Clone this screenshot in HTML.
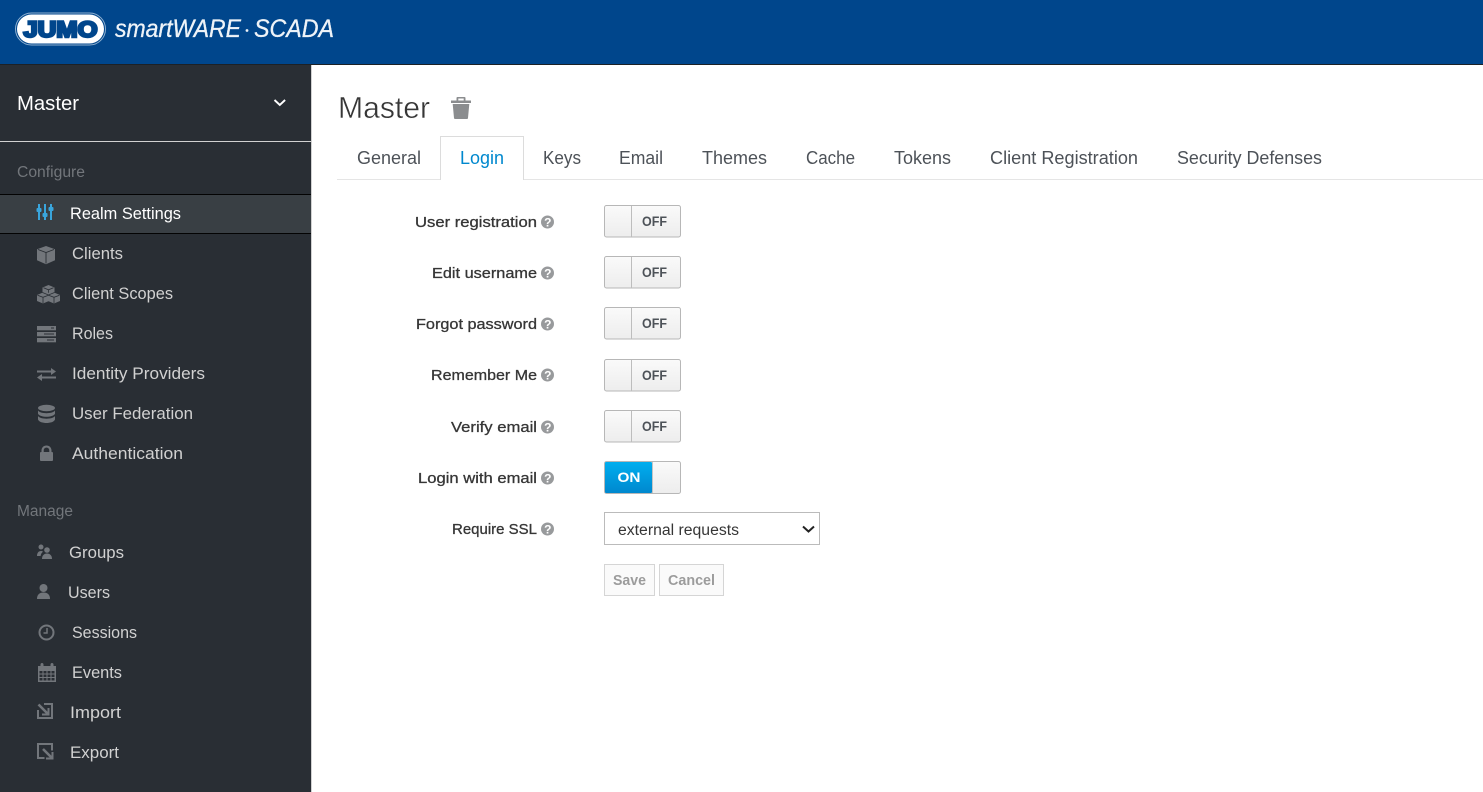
<!DOCTYPE html>
<html lang="en">
<head>
<meta charset="utf-8">
<title>Master - Login</title>
<style>
html,body{margin:0;padding:0;width:1483px;height:792px;overflow:hidden;background:#fff}
svg{display:block}
text{font-family:"Liberation Sans",sans-serif}
.nav{font-size:17px;fill:#d1d1d1}
.sec{font-size:15.5px;fill:#72767b}
.tab{font-size:18px;fill:#4d5258}
.lab{font-size:15px;fill:#363636;font-weight:400;stroke:#363636;stroke-width:.3px;text-anchor:start}
.tg{font-size:13.5px;font-weight:700;fill:#4d5258}
.ic{fill:#72767b}
</style>
</head>
<body>
<svg width="1483" height="792" viewBox="0 0 1483 792" xmlns="http://www.w3.org/2000/svg">
<defs>
<linearGradient id="g1" x1="0" y1="0" x2="0" y2="1"><stop offset="0" stop-color="#fafafa"/><stop offset="1" stop-color="#ededed"/></linearGradient>
<linearGradient id="g2" x1="0" y1="0" x2="0" y2="1"><stop offset="0" stop-color="#00aeef"/><stop offset="1" stop-color="#0088ce"/></linearGradient>
<g id="help"><circle r="6.5" fill="#989a9c"/><text x="-3.4" y="4.500" font-size="12" font-weight="700" fill="#fff">?</text></g>
<g id="off"><rect x="604.5" y=".5" width="76" height="31.5" rx="2" fill="url(#g1)" stroke="#b7b7b7"/><path d="M631.5 1v31" stroke="#bdbdbd"/><text class="tg" x="642" y="21" textLength="25" lengthAdjust="spacingAndGlyphs">OFF</text></g>
</defs>

<!-- header -->
<rect width="1483" height="64" fill="#00468c"/>
<rect y="64" width="1483" height="1" fill="#1c2126"/>
<rect x="15.500" y="13" width="90" height="32" rx="16" fill="#00468c" stroke="#8fb0d0" stroke-width="1"/>
<rect x="17" y="14.500" width="87" height="29" rx="14.500" fill="#fff"/>
<text x="23.500" y="37" font-size="22" font-weight="700" fill="#00468c" stroke="#00468c" stroke-width="2.400" textLength="74" lengthAdjust="spacingAndGlyphs">JUMO</text>
<text x="115" y="37" font-size="25" font-style="italic" fill="#eef3f8" stroke="#eef3f8" stroke-width=".3" textLength="126" lengthAdjust="spacingAndGlyphs">smartWARE</text>
<circle cx="247" cy="30.500" r="1.400" fill="#eef3f8"/>
<text x="254" y="37" font-size="25" font-style="italic" fill="#eef3f8" stroke="#eef3f8" stroke-width=".3" textLength="80" lengthAdjust="spacingAndGlyphs">SCADA</text>

<!-- sidebar -->
<rect y="65" width="311" height="727" fill="#292e34"/>
<rect x="311" y="65" width="1" height="727" fill="#d1d1d1"/>
<text x="17" y="110" font-size="20.5" fill="#fff" textLength="62" lengthAdjust="spacingAndGlyphs">Master</text>
<path d="M274.5 100l5.3 5 5.3-5" fill="none" stroke="#fff" stroke-width="1.9"/>
<rect y="141" width="311" height="1" fill="#d1d1d1"/>
<text class="sec" x="17" y="177" textLength="68" lengthAdjust="spacingAndGlyphs">Configure</text>

<rect y="194" width="311" height="40" fill="#393f44"/>
<rect y="194" width="311" height="1" fill="#030303"/>
<rect y="233" width="311" height="1" fill="#030303"/>
<g fill="#39a5dc">
<rect x="38" y="204" width="2" height="16"/><rect x="36.5" y="208" width="5" height="4" rx="1"/>
<rect x="44" y="204" width="2" height="16"/><rect x="42.5" y="213" width="5" height="4" rx="1"/>
<rect x="50" y="204" width="2" height="16"/><rect x="48.500" y="207" width="5" height="4" rx="1"/>
</g>
<text class="nav" x="70" y="219" style="fill:#fff" textLength="111" lengthAdjust="spacingAndGlyphs">Realm Settings</text>

<!-- clients -->
<path class="ic" d="M46 246l9 3.200v11l-9 4-9-4v-11z"/><path d="M38 249.500l8 3 8-3M46 252.500v11" fill="none" stroke="#292e34" stroke-width=".9"/>
<text class="nav" x="72" y="259" textLength="51" lengthAdjust="spacingAndGlyphs">Clients</text>
<!-- scopes -->
<g class="ic"><path d="M48.500 285l6 2.500v6.500l-6 2.500-6-2.500v-6.500z"/><path d="M43 292.500l6 2.500v6l-6 2.500-6-2.500v-6z"/><path d="M54 292.500l6 2.500v6l-6 2.500-6-2.500v-6z"/></g>
<path d="M43.500 287.800l5 2 5-2M48.500 289.800v3M37.500 295.300l5.500 2 5.500-2M43 297.300v6M48.500 295.300l5.500 2 5.500-2M54 297.300v6M42.500 292.500l6 2.500 6-2.500" fill="none" stroke="#292e34" stroke-width=".8"/>
<text class="nav" x="72" y="299" textLength="101" lengthAdjust="spacingAndGlyphs">Client Scopes</text>
<!-- roles -->
<g class="ic"><rect x="37" y="326" width="19" height="4.300"/><rect x="37" y="332" width="19" height="4.300"/><rect x="37" y="338" width="19" height="4.300"/></g>
<path d="M51 328h3M44 334h10M47 340h7" stroke="#292e34" stroke-width="1"/>
<text class="nav" x="72" y="339" textLength="41" lengthAdjust="spacingAndGlyphs">Roles</text>
<!-- identity -->
<path class="ic" d="M37 370.500h14v-2.500l5 3.500-5 3.500v-2.500H37zM56 376.500H42V374l-5 3.500 5 3.500v-2.500h14z"/>
<text class="nav" x="72" y="379" textLength="133" lengthAdjust="spacingAndGlyphs">Identity Providers</text>
<!-- federation -->
<g class="ic"><ellipse cx="46.500" cy="408" rx="8.500" ry="3.200"/><path d="M38 410.500c1.500 2 5 2.700 8.500 2.700s7-.7 8.500-2.700v3.200c-1 2-5 3-8.500 3s-7.500-1-8.500-3zM38 416c1.500 2 5 2.700 8.500 2.700s7-.7 8.500-2.700v3.500c-1 2.500-5 3.500-8.500 3.500s-7.500-1-8.500-3.500z"/></g>
<text class="nav" x="72" y="419" textLength="121" lengthAdjust="spacingAndGlyphs">User Federation</text>
<!-- auth -->
<path class="ic" fill-rule="evenodd" d="M40 453c0-.6.400-1 1-1h.5v-1.500c0-3 2.200-5 5-5s5 2 5 5V452h.5c.6 0 1 .4 1 1v7c0 .6-.4 1-1 1H41c-.6 0-1-.4-1-1zM43.700 452h5.600v-1.500c0-1.700-1.200-2.900-2.800-2.900s-2.800 1.200-2.800 2.900z"/>
<text class="nav" x="72" y="459" textLength="111" lengthAdjust="spacingAndGlyphs">Authentication</text>

<text class="sec" x="17" y="516" textLength="56" lengthAdjust="spacingAndGlyphs">Manage</text>
<!-- groups -->
<g class="ic"><circle cx="41" cy="547" r="2.500"/><path d="M37 556c0-3 1.500-5 4-5 1 0 1.500.3 2 .7-1.500 1-2.200 2.500-2.400 4.300z"/><circle cx="47" cy="550" r="2.800"/><path d="M42 559c0-3.500 2-5.500 5-5.500s5 2 5 5.500z"/></g>
<text class="nav" x="69" y="558" textLength="55" lengthAdjust="spacingAndGlyphs">Groups</text>
<!-- users -->
<g class="ic"><circle cx="43.500" cy="588" r="4"/><path d="M37 599c0-4.500 2.500-6.500 6.500-6.500s6.500 2 6.500 6.500z"/></g>
<text class="nav" x="68" y="598" textLength="42" lengthAdjust="spacingAndGlyphs">Users</text>
<!-- sessions -->
<circle cx="46.500" cy="632.500" r="7" fill="none" stroke="#72767b" stroke-width="2"/><path d="M47 628v5h-3.500" fill="none" stroke="#72767b" stroke-width="1.500"/>
<text class="nav" x="72" y="638" textLength="65" lengthAdjust="spacingAndGlyphs">Sessions</text>
<!-- events -->
<path class="ic" fill-rule="evenodd" d="M38 666h2.500v-1.500c0-2 3-2 3 0V666h7v-1.500c0-2 3-2 3 0V666H56v16H38zM39.500 671v2.500h3V671zM43.500 671v2.500h3V671zM47.500 671v2.500h3V671zM51.500 671v2.500h3V671zM39.500 674.500v2.500h3v-2.500zM43.500 674.500v2.500h3v-2.500zM47.500 674.500v2.500h3v-2.500zM51.500 674.500v2.500h3v-2.500zM39.500 678v2.500h3V678zM43.500 678v2.500h3V678zM47.500 678v2.500h3V678zM51.500 678v2.500h3V678z"/>
<text class="nav" x="72" y="678" textLength="50" lengthAdjust="spacingAndGlyphs">Events</text>
<!-- import -->
<path d="M44 704h8v14H38v-8" fill="none" stroke="#72767b" stroke-width="2"/>
<path d="M38.500 704.500l9 9" fill="none" stroke="#72767b" stroke-width="2.600"/>
<path d="M42 714.500h6.500V708" fill="none" stroke="#72767b" stroke-width="2"/>
<text class="nav" x="70" y="718" textLength="51" lengthAdjust="spacingAndGlyphs">Import</text>
<!-- export -->
<path d="M44.500 758H38V744h14v6.500" fill="none" stroke="#72767b" stroke-width="2"/>
<path d="M43 749l8.500 8.500" fill="none" stroke="#72767b" stroke-width="2.600"/>
<path d="M46 758.500h6.500V752" fill="none" stroke="#72767b" stroke-width="2"/>
<text class="nav" x="70" y="758" textLength="49" lengthAdjust="spacingAndGlyphs">Export</text>

<!-- heading -->
<text x="338" y="118" font-size="31" fill="#363636" stroke="#fff" stroke-width=".45" textLength="92" lengthAdjust="spacingAndGlyphs">Master</text>
<path fill="#8b8d8f" d="M451 100.500h5.500V98c0-.6.400-1 1-1h7c.6 0 1 .4 1 1v2.500h5.500v2.500h-20zM458.300 98.500v2h5.400v-2zM452.700 104h16.600l-1.300 14c0 .6-.5 1-1 1h-12c-.5 0-1-.4-1-1z"/>

<!-- tabs -->
<rect x="337" y="179" width="1146" height="1" fill="#e5e5e5"/>
<path d="M440.500 180V136.500h83V180" fill="#fff" stroke="#dcdcdc"/>
<rect x="441" y="179" width="82" height="2" fill="#fff"/>
<text class="tab" x="357" y="164" textLength="64" lengthAdjust="spacingAndGlyphs">General</text>
<text class="tab" x="460" y="164" style="fill:#0088ce" textLength="44" lengthAdjust="spacingAndGlyphs">Login</text>
<text class="tab" x="543" y="164" textLength="38" lengthAdjust="spacingAndGlyphs">Keys</text>
<text class="tab" x="619" y="164" textLength="44" lengthAdjust="spacingAndGlyphs">Email</text>
<text class="tab" x="702" y="164" textLength="65" lengthAdjust="spacingAndGlyphs">Themes</text>
<text class="tab" x="806" y="164" textLength="49" lengthAdjust="spacingAndGlyphs">Cache</text>
<text class="tab" x="894" y="164" textLength="57" lengthAdjust="spacingAndGlyphs">Tokens</text>
<text class="tab" x="990" y="164" textLength="148" lengthAdjust="spacingAndGlyphs">Client Registration</text>
<text class="tab" x="1177" y="164" textLength="145" lengthAdjust="spacingAndGlyphs">Security Defenses</text>

<!-- form labels -->
<text class="lab" x="415" y="227" textLength="122" lengthAdjust="spacingAndGlyphs">User registration</text>
<text class="lab" x="432" y="278" textLength="105" lengthAdjust="spacingAndGlyphs">Edit username</text>
<text class="lab" x="416" y="329" textLength="121" lengthAdjust="spacingAndGlyphs">Forgot password</text>
<text class="lab" x="431" y="380" textLength="106" lengthAdjust="spacingAndGlyphs">Remember Me</text>
<text class="lab" x="451" y="432" textLength="86" lengthAdjust="spacingAndGlyphs">Verify email</text>
<text class="lab" x="418" y="483" textLength="119" lengthAdjust="spacingAndGlyphs">Login with email</text>
<text class="lab" x="452" y="534" textLength="85" lengthAdjust="spacingAndGlyphs">Require SSL</text>

<use href="#help" x="547.500" y="222"/>
<use href="#help" x="547.500" y="273"/>
<use href="#help" x="547.500" y="324"/>
<use href="#help" x="547.500" y="375"/>
<use href="#help" x="547.500" y="427"/>
<use href="#help" x="547.500" y="478"/>
<use href="#help" x="547.500" y="529"/>

<!-- toggles -->
<use href="#off" y="205"/>
<use href="#off" y="256"/>
<use href="#off" y="307"/>
<use href="#off" y="359"/>
<use href="#off" y="410"/>
<rect x="604.500" y="461.500" width="76" height="32" rx="2" fill="url(#g1)" stroke="#b7b7b7"/>
<rect x="605" y="462" width="47" height="31" rx="1" fill="url(#g2)"/>
<path d="M652.500 462v31" stroke="#c4c4c4"/>
<text x="617.500" y="482" font-size="14" font-weight="700" fill="#fff" textLength="23" lengthAdjust="spacingAndGlyphs">ON</text>

<!-- select -->
<rect x="604.500" y="512.500" width="215" height="32" fill="#fff" stroke="#bbb"/>
<text x="618" y="535" font-size="15.500" fill="#363636" textLength="121" lengthAdjust="spacingAndGlyphs">external requests</text>
<path d="M803 526.500l5.500 5 5.500-5" fill="none" stroke="#222" stroke-width="2"/>

<!-- buttons -->
<rect x="604.500" y="564.500" width="50" height="31" fill="#fafafa" stroke="#d5d5d5"/>
<text x="613" y="585" font-size="14.500" font-weight="700" fill="#9c9c9c" textLength="33" lengthAdjust="spacingAndGlyphs">Save</text>
<rect x="659.500" y="564.500" width="64" height="31" fill="#fafafa" stroke="#d5d5d5"/>
<text x="668" y="585" font-size="14.500" font-weight="700" fill="#9c9c9c" textLength="47" lengthAdjust="spacingAndGlyphs">Cancel</text>
</svg>
</body>
</html>
